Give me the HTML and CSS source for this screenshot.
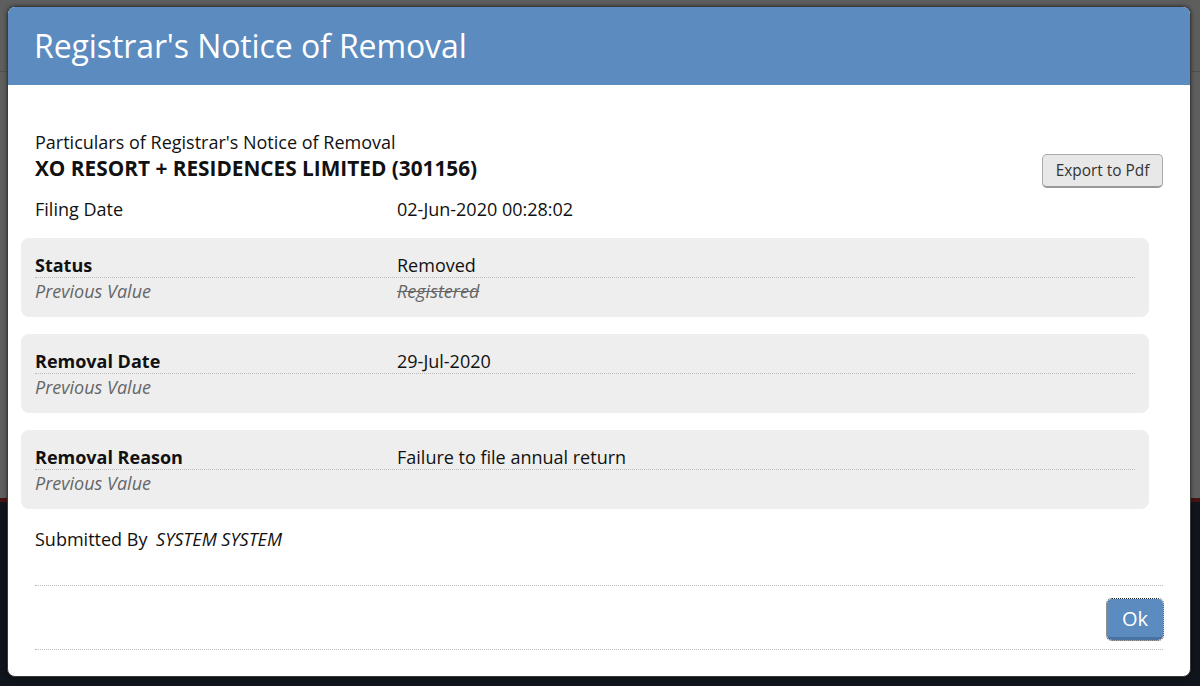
FILE: index.html
```html
<!DOCTYPE html>
<html>
<head>
<meta charset="utf-8">
<link rel="stylesheet" href="styles.css">
</head>
<body>
<div class="backdrop">
  <div class="bg-top"></div>
  <div class="bg-mid"></div>
  <div class="bg-red"></div>
  <div class="bg-dark"></div>
</div>
<div class="modal">
  <div class="modal-header">Registrar's Notice of Removal</div>
  <div class="modal-body">
    <div class="intro">
      <div class="intro-text">
        <div class="subtitle">Particulars of Registrar's Notice of Removal</div>
        <div class="company">XO RESORT + RESIDENCES LIMITED (301156)</div>
      </div>
      <button class="btn-export">Export to Pdf</button>
    </div>
    <div class="row plain">
      <div class="label">Filing Date</div>
      <div class="value">02-Jun-2020 00:28:02</div>
    </div>
    <div class="card">
      <div class="row current">
        <div class="label strong">Status</div>
        <div class="value">Removed</div>
      </div>
      <div class="row previous">
        <div class="label prev">Previous Value</div>
        <div class="value prev-val">Registered</div>
      </div>
    </div>
    <div class="card">
      <div class="row current">
        <div class="label strong">Removal Date</div>
        <div class="value">29-Jul-2020</div>
      </div>
      <div class="row previous">
        <div class="label prev">Previous Value</div>
        <div class="value"></div>
      </div>
    </div>
    <div class="card">
      <div class="row current">
        <div class="label strong">Removal Reason</div>
        <div class="value">Failure to file annual return</div>
      </div>
      <div class="row previous">
        <div class="label prev">Previous Value</div>
        <div class="value"></div>
      </div>
    </div>
    <div class="submitted">Submitted By <em class="submitter">SYSTEM SYSTEM</em></div>
    <div class="footer">
      <button class="btn-ok">Ok</button>
    </div>
  </div>
</div>
</body>
</html>
```

FILE: styles.css
```css
* { box-sizing: border-box; }
html, body {
  margin: 0;
  padding: 0;
  width: 1200px;
  height: 686px;
  overflow: hidden;
}
body {
  font-family: "Open Sans", "DejaVu Sans", sans-serif;
  color: #111;
  position: relative;
}
.backdrop {
  display: flex;
  flex-direction: column;
  height: 686px;
}
.bg-top {
  height: 72px;
  background: #5e5e5e;
  border-bottom: 1px solid #4f4f4f;
}
.bg-mid {
  height: 426px;
  background: #5f5f5f;
}
.bg-red {
  height: 4px;
  background: #4a1313;
}
.bg-dark {
  flex: 1;
  background: #0f151a;
}
.modal {
  position: absolute;
  left: 7px;
  top: 6px;
  width: 1184px;
  height: 671px;
  background: #fff;
  border-radius: 8px;
  border: 1px solid #3a3a3a;
  overflow: hidden;
  box-shadow: 0 0 4px rgba(0,0,0,0.5);
}
.modal-header {
  height: 78px;
  background: #5b8bbf;
  color: #fff;
  font-size: 32px;
  font-weight: 400;
  line-height: 78px;
  padding-left: 26px;
  letter-spacing: -0.1px;
}
.modal-body {
  padding: 45px 27px 0 27px;
}
.intro {
  display: flex;
  justify-content: space-between;
  align-items: flex-start;
}
.subtitle {
  font-size: 18px;
  line-height: 24px;
}
.company {
  margin-top: 3px;
  font-size: 20.8px;
  font-weight: 700;
  line-height: 23px;
}
.btn-export {
  margin-top: 24px;
  font-family: "Open Sans", "DejaVu Sans", sans-serif;
  font-size: 15.4px;
  color: #333;
  background: #e8e8e8;
  border: 1px solid #aaa;
  border-bottom: 2px solid #999;
  border-radius: 5px;
  height: 34px;
  width: 121px;
  padding: 0;
}
.row {
  display: flex;
  font-size: 18px;
  line-height: 22px;
}
.row.plain {
  margin-top: 10px;
  margin-bottom: 18px;
}
.label {
  width: 362px;
  flex: none;
}
.value { flex: 1; }
.strong { font-weight: 700; }
.card {
  background: #eeeeee;
  border-radius: 8px;
  margin: 0 14px 17px -14px;
  padding: 16px 14px 15px 14px;
}
.row.current {
  border-bottom: 1px dotted #bbb;
  padding-bottom: 1px;
}
.row.previous {
  padding-top: 2px;
}
.prev {
  font-style: italic;
  color: #666;
}
.prev-val {
  font-style: italic;
  color: #666;
  text-decoration: line-through;
}
.submitted {
  font-size: 18px;
  line-height: 22px;
  margin-top: 19px;
}
.submitter {
  margin-left: 4px;
}
.footer {
  margin-top: 35px;
  border-top: 1px dotted #bbb;
  border-bottom: 1px dotted #bbb;
  display: flex;
  justify-content: flex-end;
  padding: 13px 0 9px 0;
}
.btn-ok {
  font-family: "Open Sans", "DejaVu Sans", sans-serif;
  width: 56px;
  height: 41px;
  background: #5b8bbf;
  color: #fff;
  font-size: 20px;
  border: none;
  border-bottom: 3px solid #4a72a0;
  border-radius: 5px;
  outline: 1px dotted #222;
  outline-offset: 0;
  padding: 0;
}
```
